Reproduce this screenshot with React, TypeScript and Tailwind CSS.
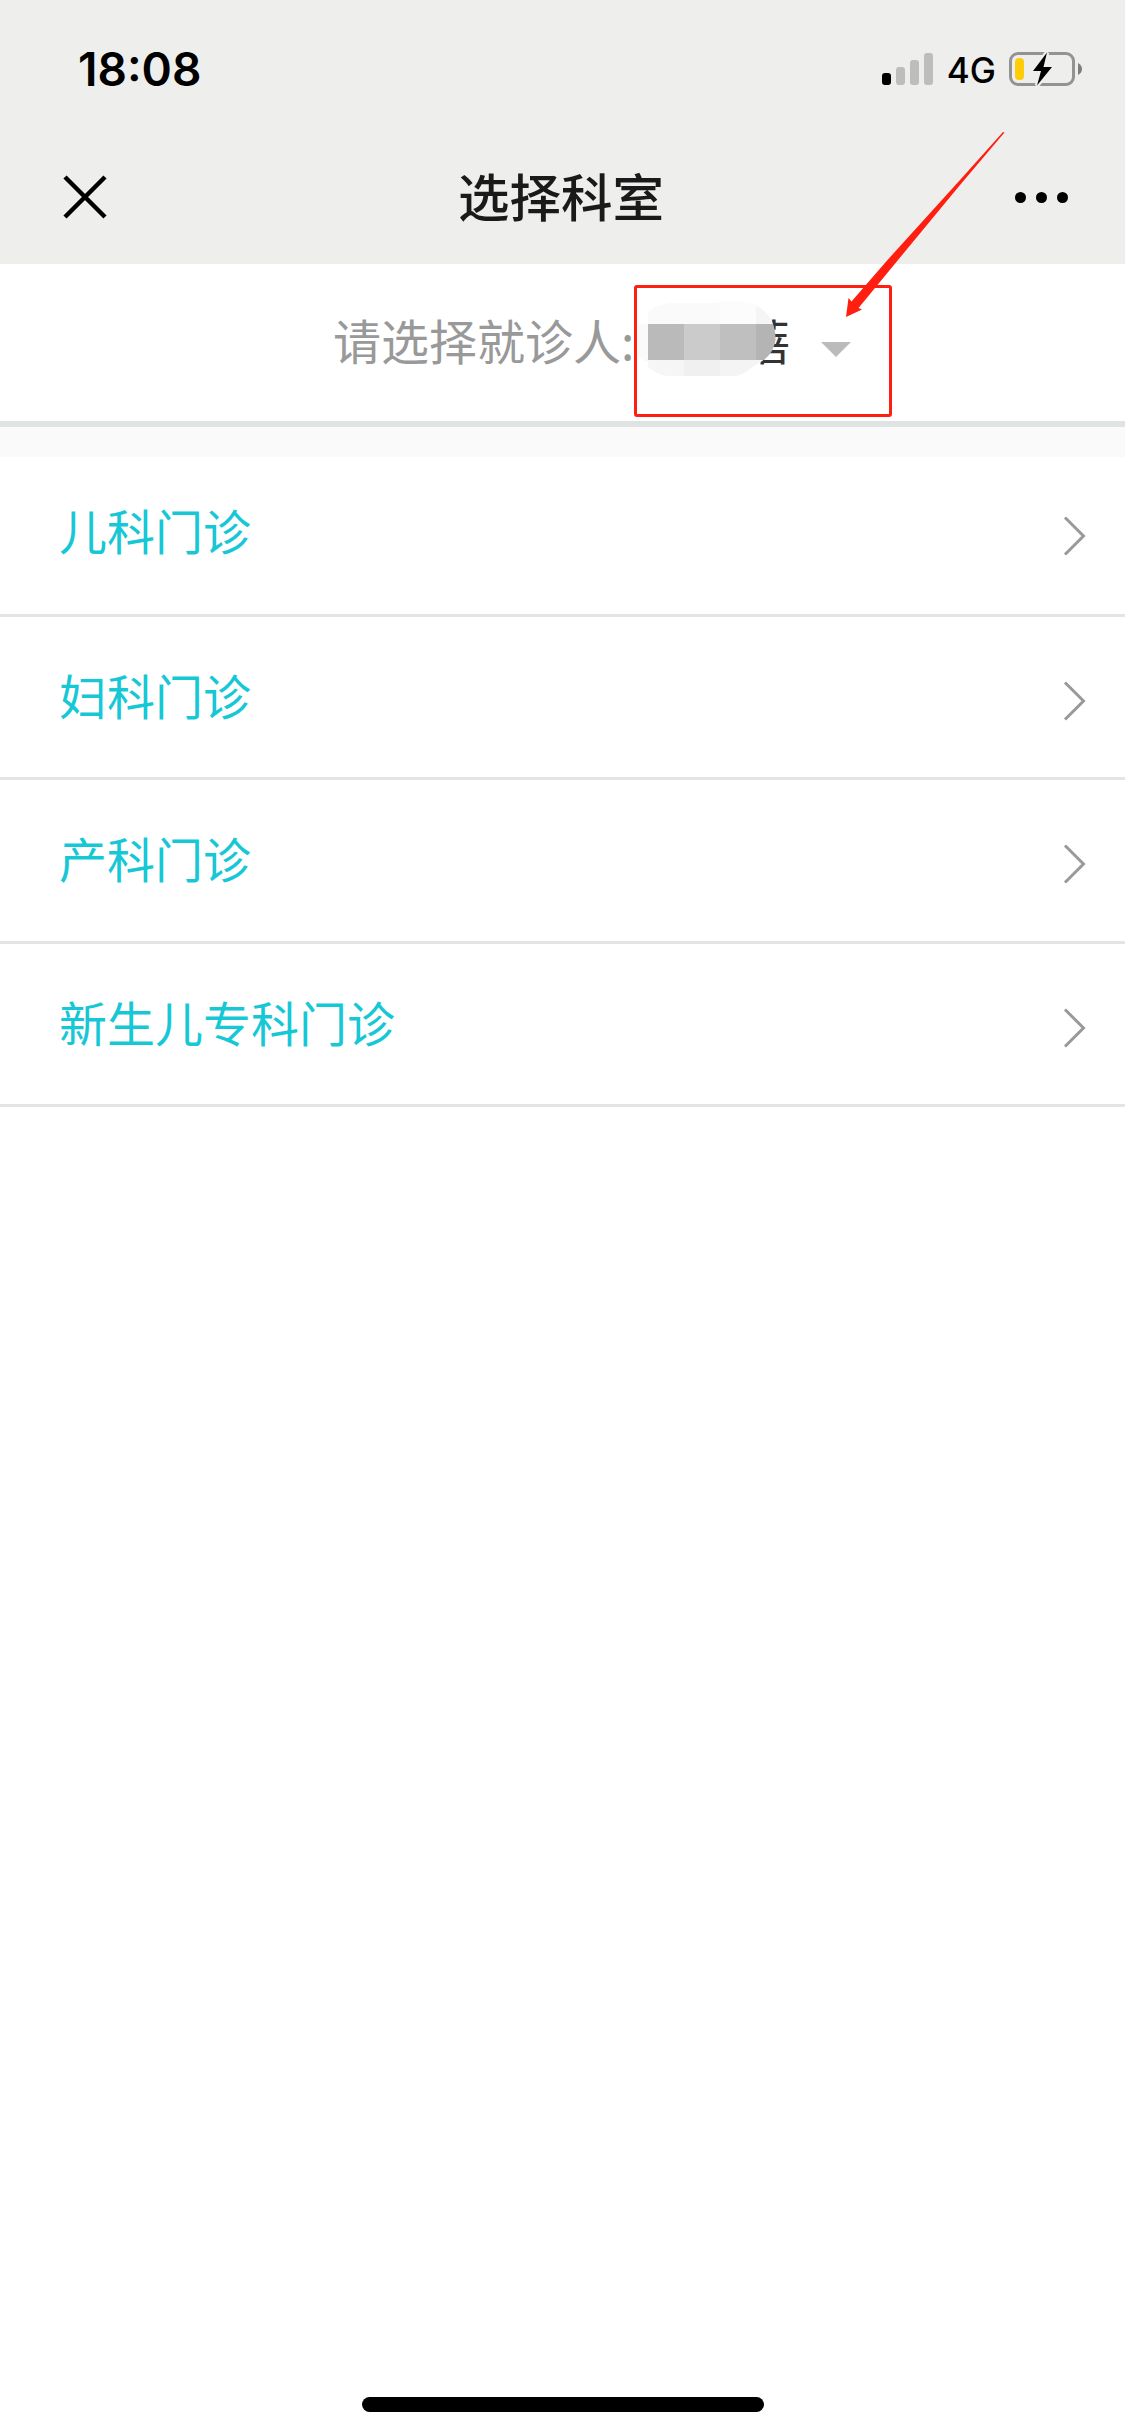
import clsx from "clsx";

type Department = {
  name: string;
  className: string;
};

const departments: Department[] = [
  { name: "儿科门诊", className: "h-[160px] pb-[6px]" },
  { name: "妇科门诊", className: "h-[163px]" },
  { name: "产科门诊", className: "h-[164px]" },
  { name: "新生儿专科门诊", className: "h-[163px]" },
];

function SignalBars() {
  return (
    <div className="flex h-8 items-end gap-[5px]">
      <div className="h-3 w-[9px] rounded-[3px] bg-black" />
      <div className="h-[18px] w-[9px] rounded-[3px] bg-[#bdbdbc]" />
      <div className="h-[25px] w-[9px] rounded-[3px] bg-[#bdbdbc]" />
      <div className="h-8 w-[9px] rounded-[3px] bg-[#bdbdbc]" />
    </div>
  );
}

function Battery() {
  return (
    <svg width="74" height="36" viewBox="0 0 74 36" fill="none">
      <rect x="1.5" y="2.5" width="63" height="31" rx="7.5" stroke="#939393" strokeWidth="3" />
      <rect x="6" y="7" width="9" height="22" rx="4" fill="#ffcc0a" />
      <path d="M69 12c2.700 1.500 4 3.500 4 6s-1.300 4.500-4 6z" fill="#7e7e7e" />
      <path
        d="M38 1.500 24 20h8l-4 14.500L43 16h-8.500z"
        fill="#000"
        stroke="#eeeeec"
        strokeWidth="4.500"
        paintOrder="stroke"
      />
    </svg>
  );
}

function StatusBar() {
  return (
    <div className="flex h-[138px] items-center justify-between pl-[78px] pr-[42px]">
      <span className="font-['Inter',sans-serif] text-[46px] leading-none font-semibold">
        18:08
      </span>
      <div className="flex items-center">
        <SignalBars />
        <span className="mt-[3px] ml-[14px] font-['Inter',sans-serif] text-[35px] leading-none font-medium">
          4G
        </span>
        <div className="ml-[13px]">
          <Battery />
        </div>
      </div>
    </div>
  );
}

function NavBar() {
  return (
    <div className="flex h-[118px] items-center justify-between pr-[57px] pl-[62px]">
      <svg width="46" height="46" viewBox="0 0 46 46" stroke="#000" strokeWidth="4.500">
        <path d="M3 3 43 43M43 3 3 43" />
      </svg>
      <h1 className="-mt-1 mr-px text-[51.500px] leading-none font-medium text-[#1a1a1a]">选择科室</h1>
      <div className="flex gap-[10px]">
        <i className="size-[11px] rounded-full bg-black" />
        <i className="size-[11px] rounded-full bg-black" />
        <i className="size-[11px] rounded-full bg-black" />
      </div>
    </div>
  );
}

// pixelated cover over the patient's name
function Mosaic() {
  return (
    <svg className="absolute top-[37px] left-[636px]" width="142" height="78" viewBox="636 301 142 78">
      <clipPath id="blob">
        <path d="M638 324C638 324 642 325 648 324V312C656 305 666 303 674 303H716C726 300 742 300 755 305C769 311 776 324 775.500 340C774 350 769 358 757 364C748 370 742 376 734 376H670C660 376 653 371 648 367V361C640 360 638 356 638 350Z" />
      </clipPath>
      <g clipPath="url(#blob)" shapeRendering="crispEdges">
        <rect x="636" y="300" width="84" height="24" fill="#fafafa" />
        <rect x="720" y="300" width="36" height="24" fill="#fcfcfc" />
        <rect x="756" y="300" width="22" height="24" fill="#f5f5f5" />
        <rect x="636" y="324" width="12" height="36" fill="#fafafa" />
        <rect x="648" y="324" width="36" height="36" fill="#bababa" />
        <rect x="684" y="324" width="36" height="36" fill="#cbcbcb" />
        <rect x="720" y="324" width="36" height="36" fill="#bfbfbf" />
        <rect x="756" y="324" width="22" height="36" fill="#b4b4b4" />
        <rect x="636" y="360" width="48" height="19" fill="#f6f6f6" />
        <rect x="684" y="360" width="36" height="19" fill="#f0f0f0" />
        <rect x="720" y="360" width="58" height="19" fill="#f4f4f4" />
      </g>
    </svg>
  );
}

function PatientSelect() {
  return (
    <div className="relative flex h-[163px] items-center border-b-[6px] border-[#dfe3e3] pl-[333px] text-[48px] leading-none">
      <span className="-mt-[8px] w-[409px] text-[#999]">请选择就诊人:</span>
      <span className="-mt-[8px] text-[#333]">蓓</span>
      <svg className="mt-[14px] ml-[31px]" width="30" height="15" viewBox="0 0 30 15">
        <path d="M0 0h30L15 15z" fill="#bbb" />
      </svg>
      <Mosaic />
      <div className="absolute top-[21px] left-[634px] h-[132px] w-[258px] rounded-[3px] border-3 border-[#ff1e10]" />
    </div>
  );
}

function Chevron() {
  return (
    <svg width="24" height="42" viewBox="0 0 24 42" fill="none" stroke="#999" strokeWidth="3">
      <path d="M2 2.500 20.500 21 2 39.500" />
    </svg>
  );
}

export default function App() {
  return (
    <div className="relative flex h-[2436px] w-[1125px] flex-col overflow-hidden bg-white font-['Noto_Sans_CJK_SC',sans-serif] text-black">
      <header className="h-[264px] bg-[#eeeeec]">
        <StatusBar />
        <NavBar />
      </header>

      <PatientSelect />
      <div className="h-[30px] bg-[#fafafa]" />

      <ul>
        {departments.map((d) => (
          <li
            key={d.name}
            className={clsx(
              "flex items-center justify-between border-b-3 border-[#e3e4e5] pr-[38px] pl-[59px]",
              d.className
            )}
          >
            <span className="-mt-[7px] text-[48px] leading-none text-[#16c8d6]">{d.name}</span>
            <span className="mt-[7px]">
              <Chevron />
            </span>
          </li>
        ))}
      </ul>

      <div className="mx-auto mt-auto mb-6 h-[15px] w-[402px] rounded-full bg-black" />

      {/* pointer to the dropdown */}
      <svg
        className="absolute top-[130px] left-[840px]"
        width="170"
        height="190"
        viewBox="840 130 170 190"
      >
        <path
          d="M846 317 848.500 298 851.500 301.500 887.500 260 960 180 1003 132 1004.500 132.500 960 185 898 260 858.500 308 862 309.500z"
          fill="#ff1e10"
        />
      </svg>
    </div>
  );
}
